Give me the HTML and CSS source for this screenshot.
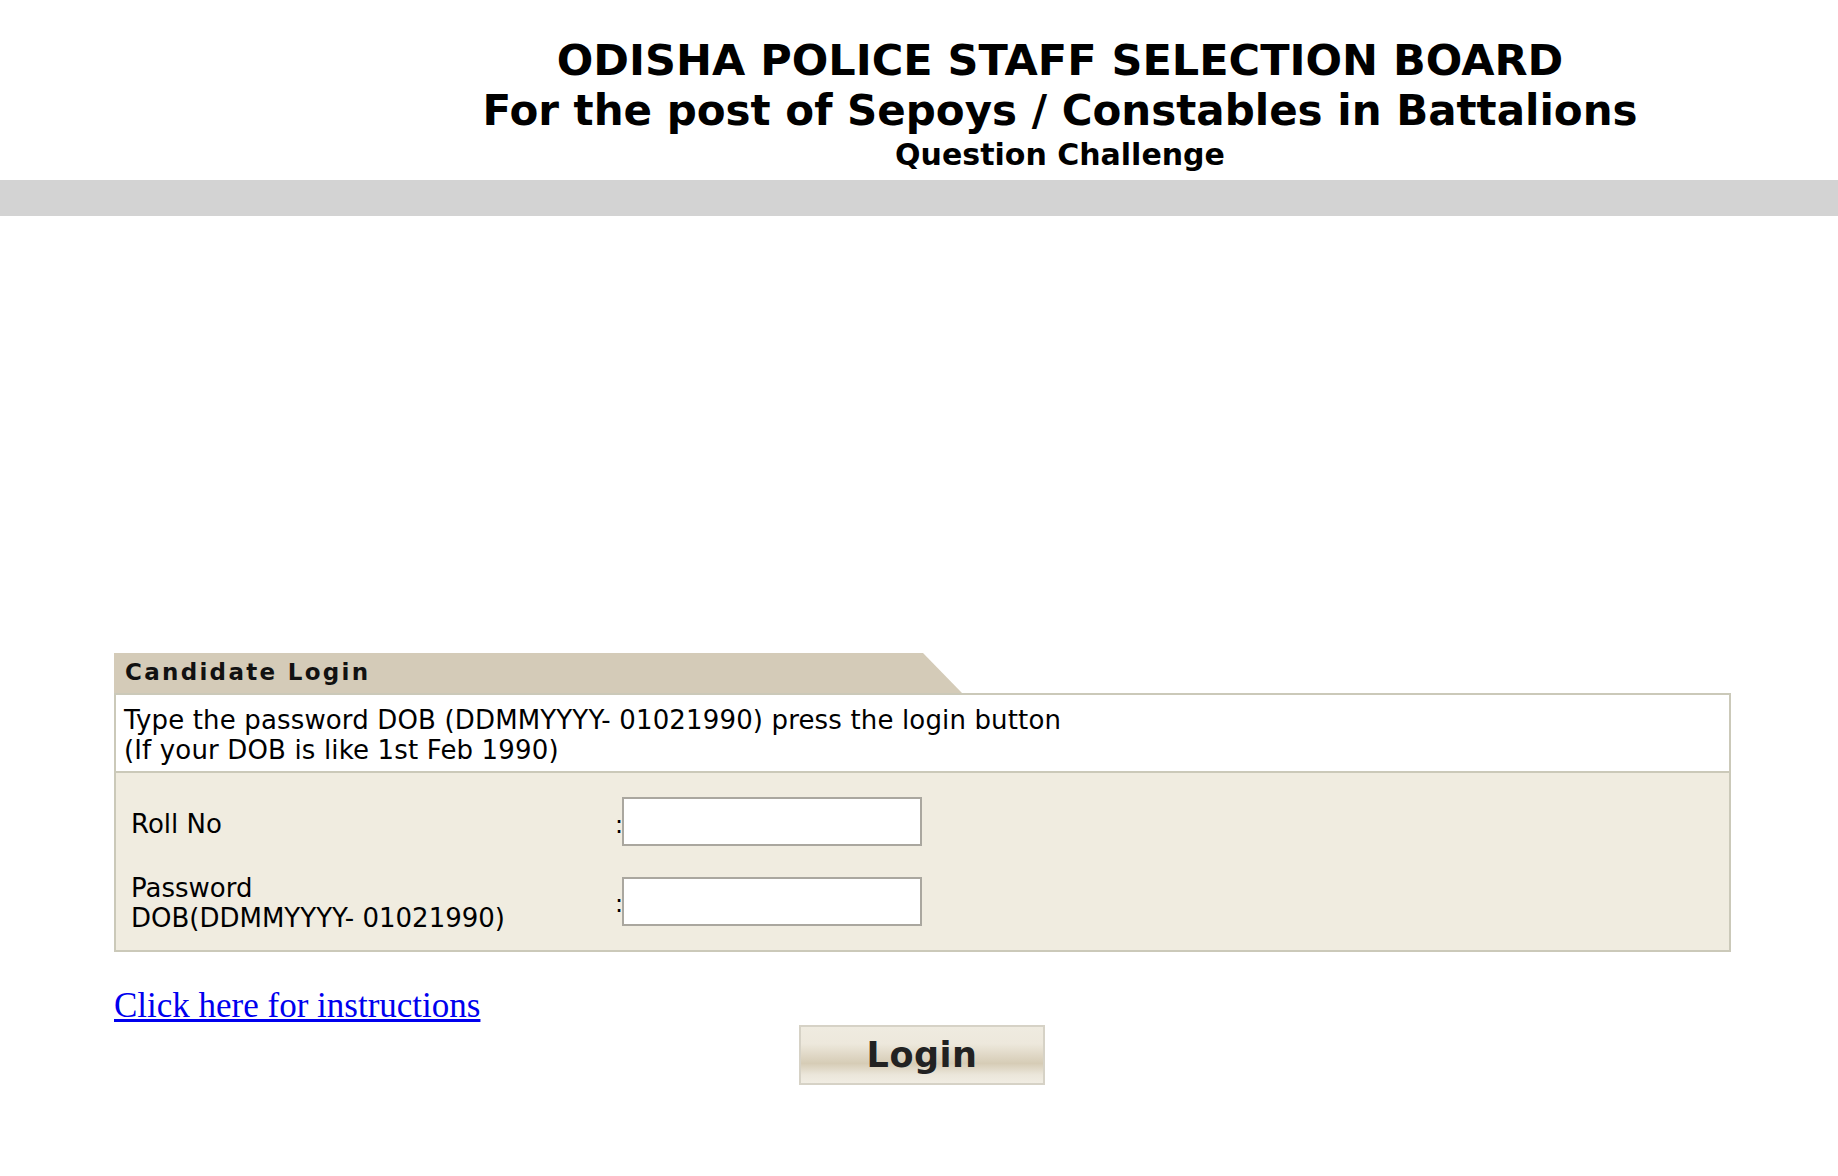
FILE: index.html
```html
<!DOCTYPE html>
<html lang="en">
<head>
<meta charset="UTF-8">
<title>OPSSB - Question Challenge</title>
<link rel="stylesheet" href="styles.css">
</head>
<body>

<!-- Header -->
<header class="top">
    <div class="logo-space"></div>
    <div class="titles">
        <h1>ODISHA POLICE STAFF SELECTION BOARD</h1>
        <h2>For the post of Sepoys / Constables in Battalions</h2>
        <h3>Question Challenge</h3>
    </div>
</header>
<div class="grey-bar"></div>

<main class="content">
    <!-- Login box -->
    <div class="login-tab">Candidate Login</div>
    <div class="login-box">
        <div class="note">
            Type the password DOB (DDMMYYYY- 01021990) press the login button<br>
            (If your DOB is like 1st Feb 1990)
        </div>
        <div class="fields">
            <label class="lbl" for="rollno">Roll No</label>
            <span class="colon">:</span>
            <input type="text" id="rollno" class="txt">

            <label class="lbl" for="pwd">Password<br>DOB(DDMMYYYY- 01021990)</label>
            <span class="colon">:</span>
            <input type="password" id="pwd" class="txt">
        </div>
    </div>

    <a class="instr" href="#">Click here for instructions</a>
    <div class="btn-row">
        <button class="login-btn" type="button">Login</button>
    </div>
</main>

</body>
</html>
```

FILE: styles.css
```css
body {
    margin: 0;
    padding: 0;
    background-color: #fff;
    font-family: "DejaVu Sans", Verdana, sans-serif;
    color: #000;
}

/* Header */
.top {
    display: flex;
    padding-top: 34px;
    height: 146px;
}

.logo-space {
    width: 282px;
    flex-shrink: 0;
}

.titles {
    flex: 1;
    text-align: center;
}

.titles h1 {
    margin: 0;
    font-size: 43px;
    line-height: 53px;
    font-weight: bold;
}

.titles h2 {
    margin: 0;
    font-size: 42px;
    line-height: 47px;
    font-weight: bold;
}

.titles h3 {
    margin: 0;
    font-size: 30px;
    line-height: 41px;
    font-weight: bold;
}

.grey-bar {
    height: 36px;
    background-color: #d3d3d3;
}

/* Login */
.content {
    margin: 437px 107px 0 114px;
}

.login-tab {
    width: 848px;
    height: 40px;
    box-sizing: border-box;
    padding: 6px 0 0 11px;
    background-color: #d4cbb8;
    clip-path: polygon(0 0, 809px 0, 100% 100%, 0 100%);
    font-size: 23px;
    font-weight: bold;
    letter-spacing: 2.3px;
    color: #111;
}

.login-box {
    border: 2px solid #cbc9b9;
    background-color: #f0ece0;
}

.note {
    background-color: #fff;
    border-bottom: 2px solid #cbc9b9;
    padding: 10px 8px 6px;
    font-size: 26px;
    line-height: 30px;
    letter-spacing: 0.15px;
}

.fields {
    display: grid;
    grid-template-columns: 484px 7px 300px;
    row-gap: 23px;
    align-items: center;
    padding: 24px 15px 17px;
}

.lbl {
    font-size: 26px;
    line-height: 30px;
    text-align: left;
    padding-top: 4px;
}

.colon {
    font-size: 24px;
    text-align: right;
    padding-top: 6px;
}

.txt {
    box-sizing: border-box;
    height: 49px;
    width: 300px;
    margin: 0;
    border: 2px solid #aaa79f;
    background-color: #fff;
    font-size: 22px;
    padding: 4px 8px;
}

.instr {
    display: block;
    width: fit-content;
    margin-top: 34px;
    font-family: "Liberation Serif", "Times New Roman", serif;
    font-size: 35px;
    line-height: 39px;
    color: #0000ee;
    text-decoration: underline;
}

.btn-row {
    padding-left: 685px;
    margin-top: 0;
}

.login-btn {
    display: block;
    width: 246px;
    height: 60px;
    border: 2px solid #d6d2c6;
    background: linear-gradient(to bottom, #efebe0 0%, #ede8dc 30%, #d6ccb6 65%, #ebe6da 85%, #f1ede3 100%);
    font-family: "DejaVu Sans", Verdana, sans-serif;
    font-size: 35px;
    font-weight: bold;
    letter-spacing: 0.5px;
    color: #222;
    cursor: pointer;
    padding: 0;
}
```
